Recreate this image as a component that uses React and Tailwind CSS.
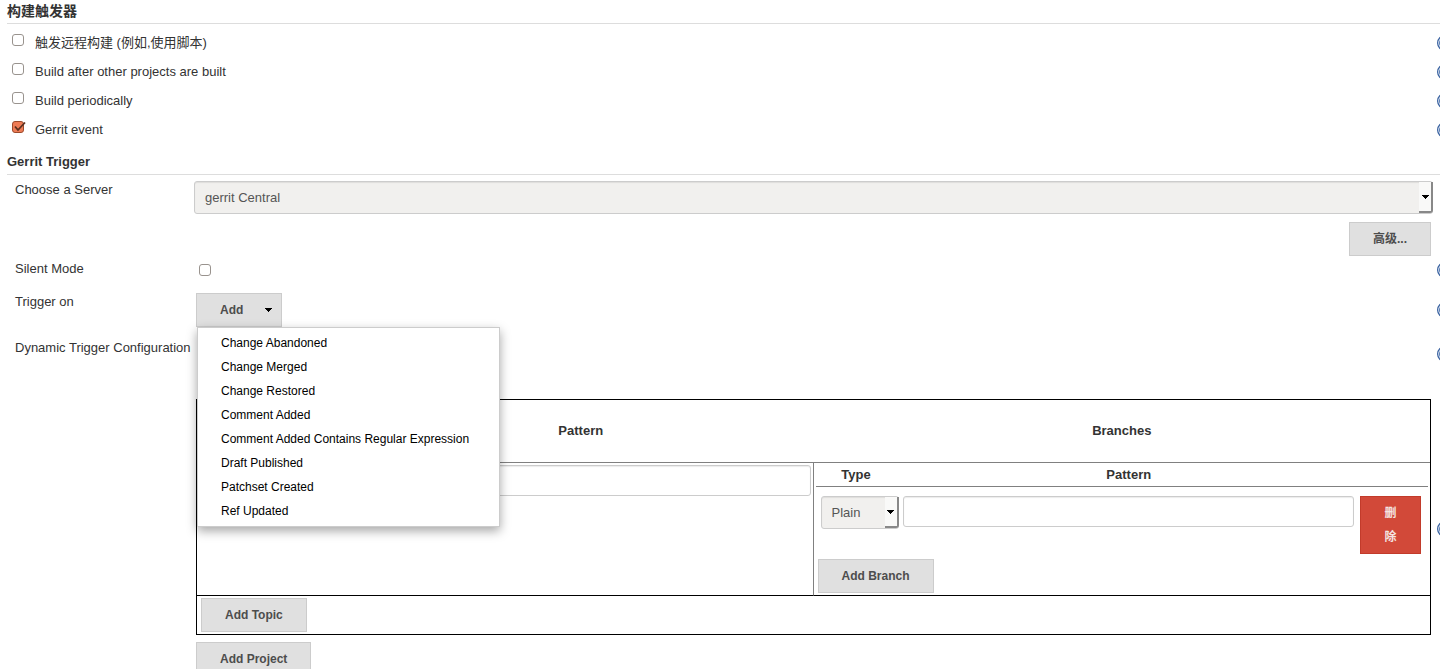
import React, { useState } from "react";

const triggers = [
  { id: "remote", label: "触发远程构建 (例如,使用脚本)" },
  { id: "after", label: "Build after other projects are built" },
  { id: "periodic", label: "Build periodically" },
  { id: "gerrit", label: "Gerrit event" },
];

const events = [
  "Change Abandoned",
  "Change Merged",
  "Change Restored",
  "Comment Added",
  "Comment Added Contains Regular Expression",
  "Draft Published",
  "Patchset Created",
  "Ref Updated",
];

const buttonStyle =
  "h-[34px] border border-[#ccc] bg-[#e0e0e0] px-[23px] text-xs font-bold text-[#4d4d4d] whitespace-nowrap";
const inputStyle =
  "block h-[31px] w-full rounded-[3px] border border-[#ccc] bg-white px-2 shadow-[inset_0_1px_1px_rgba(0,0,0,0.08)]";

// The help column is narrower than its icon, so the icon runs past the window edge
function Help({ topic }) {
  return (
    <div className="w-[3px] shrink-0 self-center">
      <button type="button" aria-label={`Help for ${topic}`} className="block h-4 w-4">
        <svg viewBox="0 0 16 16" className="h-4 w-4">
          <circle cx="8" cy="8" r="7.4" fill="#dfe8f4" stroke="#3a62a0" strokeWidth="1.2" />
          <circle cx="8" cy="8" r="5.8" fill="#3b65a5" />
          <path d="M5.8 6.2a2.2 2.2 0 1 1 3.2 2c-.7.4-1 .8-1 1.5M8 11v1.4" fill="none" stroke="#fff" strokeWidth="1.5" />
        </svg>
      </button>
    </div>
  );
}

function Arrow() {
  return (
    <svg viewBox="0 0 7 4" className="h-1 w-[7px]" shapeRendering="crispEdges">
      <path d="M0 0h7v1H6v1H5v1H4v1H3V3H2V2H1V1H0z" fill="#000" />
    </svg>
  );
}

function Checkbox({ id, checked, onChange }) {
  return (
    <span className="relative block h-3 w-3">
      <input
        id={id}
        type="checkbox"
        checked={checked}
        onChange={onChange}
        className="block h-3 w-3 appearance-none rounded-[3px] border border-[#99938e] bg-white checked:border-[#9c4a2c] checked:bg-[#ee7c56]"
      />
      {checked && (
        <svg viewBox="0 0 14 12" className="pointer-events-none absolute left-0 top-0 h-3 w-3.5">
          <path d="M3 5.5L6 9L13 1.5" fill="none" stroke="#5a3020" strokeWidth="1.8" />
        </svg>
      )}
    </span>
  );
}

function Select({ id, label, options }) {
  return (
    <div className="relative">
      <select
        id={id}
        aria-label={label}
        className="block h-[33px] w-full appearance-none rounded-[3px] border border-[#ccc] bg-[#f1f0ee] pl-2.5 pr-4 text-[#555] shadow-[inset_0_1px_1px_rgba(0,0,0,0.08)]"
      >
        {options.map((option) => (
          <option key={option}>{option}</option>
        ))}
      </select>
      <span className="pointer-events-none absolute inset-y-0 right-0 my-px flex w-3.5 items-center justify-center rounded-br-[3px] border-b-2 border-r-2 border-[#888] bg-[#f9f9f8]">
        <Arrow />
      </span>
    </div>
  );
}

function SectionTitle({ className, children }) {
  return (
    <h2 className={`ml-[7px] border-b border-[#ddd] pb-px font-bold leading-[22px] ${className}`}>
      {children}
    </h2>
  );
}

function FormRow({ label, htmlFor, help, className, children }) {
  return (
    <div className={`flex items-start pl-[15px] ${className}`}>
      <div className="w-[181px] shrink-0 whitespace-nowrap leading-[18px]">
        {label && <label htmlFor={htmlFor}>{label}</label>}
      </div>
      <div className="mr-1.5 min-w-0 flex-1 self-stretch">{children}</div>
      {help ? <Help topic={help} /> : <div className="w-[3px] shrink-0" />}
    </div>
  );
}

function Branches() {
  return (
    <>
      <table className="w-full table-fixed border-separate border-spacing-0">
        <thead>
          <tr className="h-6">
            <th className="w-[85px] border-b border-[#808080] pr-1 font-bold">Type</th>
            <th className="border-b border-[#808080] font-bold">Pattern</th>
            <th className="w-[71px] border-b border-[#808080]"></th>
          </tr>
        </thead>
        <tbody>
          <tr className="align-top">
            <td className="pl-[5px] pr-0.5 pt-[9px]">
              <Select label="Branch type" options={["Plain", "Path", "RegExp"]} />
            </td>
            <td className="pl-0.5 pr-[3px] pt-[9px]">
              <input type="text" aria-label="Branch pattern" className={inputStyle} />
            </td>
            <td className="pl-[3px] pr-[7px] pt-[9px]">
              <button
                type="button"
                className="block w-full border border-[#c23b2b] bg-[#d24939] px-[23px] py-1 text-xs font-bold leading-6 text-[#f4e4e2]"
              >
                删除
              </button>
            </td>
          </tr>
        </tbody>
      </table>
      <div className="pb-0.5 pl-0.5 pt-[5px]">
        <button type="button" className={`block ${buttonStyle}`}>
          Add Branch
        </button>
      </div>
    </>
  );
}

export default function App() {
  const [selected, setSelected] = useState({ gerrit: true });
  const [silent, setSilent] = useState(false);
  const [menuOpen, setMenuOpen] = useState(true);

  const toggle = (id) => setSelected((prev) => ({ ...prev, [id]: !prev[id] }));

  return (
    <div className="h-screen overflow-hidden bg-white font-['Liberation_Sans','Noto_Sans_CJK_SC',sans-serif] text-[13px] text-[#333]">
      {/* Build triggers */}
      <SectionTitle className="text-sm leading-[22px]">构建触发器</SectionTitle>
      <div className="pb-[7px] pt-1">
        {triggers.map((item) => (
          <div key={item.id} className="flex h-[29px] items-center pl-3">
            <div className="h-[18px] w-[23px] shrink-0">
              <Checkbox id={item.id} checked={!!selected[item.id]} onChange={() => toggle(item.id)} />
            </div>
            <label htmlFor={item.id} className="flex-1">
              {item.label}
            </label>
            <Help topic={item.label} />
          </div>
        ))}
      </div>

      {/* Gerrit trigger */}
      <SectionTitle className="text-[13px]">Gerrit Trigger</SectionTitle>
      <FormRow label="Choose a Server" htmlFor="server" className="pt-1.5">
        <div className="-mx-0.5">
          <Select id="server" options={["gerrit Central"]} />
        </div>
        <div className="flex justify-end pt-2">
          <button type="button" className={buttonStyle}>
            高级...
          </button>
        </div>
      </FormRow>

      <FormRow label="Silent Mode" htmlFor="silent" help="Silent Mode" className="mt-1 h-5">
        <div className="flex h-full items-center pl-[3px]">
          <Checkbox id="silent" checked={silent} onChange={() => setSilent(!silent)} />
        </div>
      </FormRow>

      <FormRow label="Trigger on" htmlFor="add-event" help="Trigger on" className="mt-[13px]">
        <div className="relative w-fit">
          <button
            id="add-event"
            type="button"
            onClick={() => setMenuOpen(!menuOpen)}
            className="flex h-[34px] items-center gap-[22px] border border-[#ccc] bg-[#e0e0e0] pl-[23px] pr-[9px] text-xs font-bold text-[#4d4d4d]"
          >
            Add
            <Arrow />
          </button>
          {menuOpen && (
            <ul className="absolute left-px top-full z-10 min-w-[303px] border border-[#ccc] bg-white py-[3px] text-xs text-black shadow-[0_4px_10px_rgba(0,0,0,0.35)]">
              {events.map((event) => (
                <li key={event}>
                  <button
                    type="button"
                    className="block h-6 w-full whitespace-nowrap px-[23px] text-left hover:bg-gray-100"
                  >
                    {event}
                  </button>
                </li>
              ))}
            </ul>
          )}
        </div>
      </FormRow>

      <FormRow
        label="Dynamic Trigger Configuration"
        help="Dynamic Trigger Configuration"
        className="mt-3 h-[30px]"
      />

      <FormRow help="Gerrit Project" className="mt-[13px]">
        <div className="pt-[17px]">
          <table className="w-full table-fixed border-separate border-spacing-0 border border-black">
            <thead>
              <tr className="h-[63px]">
                <th className="w-[151px] border-b border-[#808080]"></th>
                <th className="border-b border-[#808080] font-bold">Pattern</th>
                <th className="w-1/2 border-b border-[#808080] font-bold">Branches</th>
              </tr>
            </thead>
            <tbody>
              <tr className="align-top">
                <td className="border-b border-black"></td>
                <td className="border-b border-r border-b-black border-r-[#808080] pr-0.5 pt-0.5">
                  <input type="text" aria-label="Project pattern" className={inputStyle} />
                </td>
                <td className="border-b border-black px-0.5">
                  <Branches />
                </td>
              </tr>
              <tr>
                <td colSpan={3} className="px-1 py-0.5">
                  <button type="button" className={`block ${buttonStyle}`}>
                    Add Topic
                  </button>
                </td>
              </tr>
            </tbody>
          </table>
          <button type="button" className={`mt-[7px] block ${buttonStyle}`}>
            Add Project
          </button>
        </div>
      </FormRow>
    </div>
  );
}
